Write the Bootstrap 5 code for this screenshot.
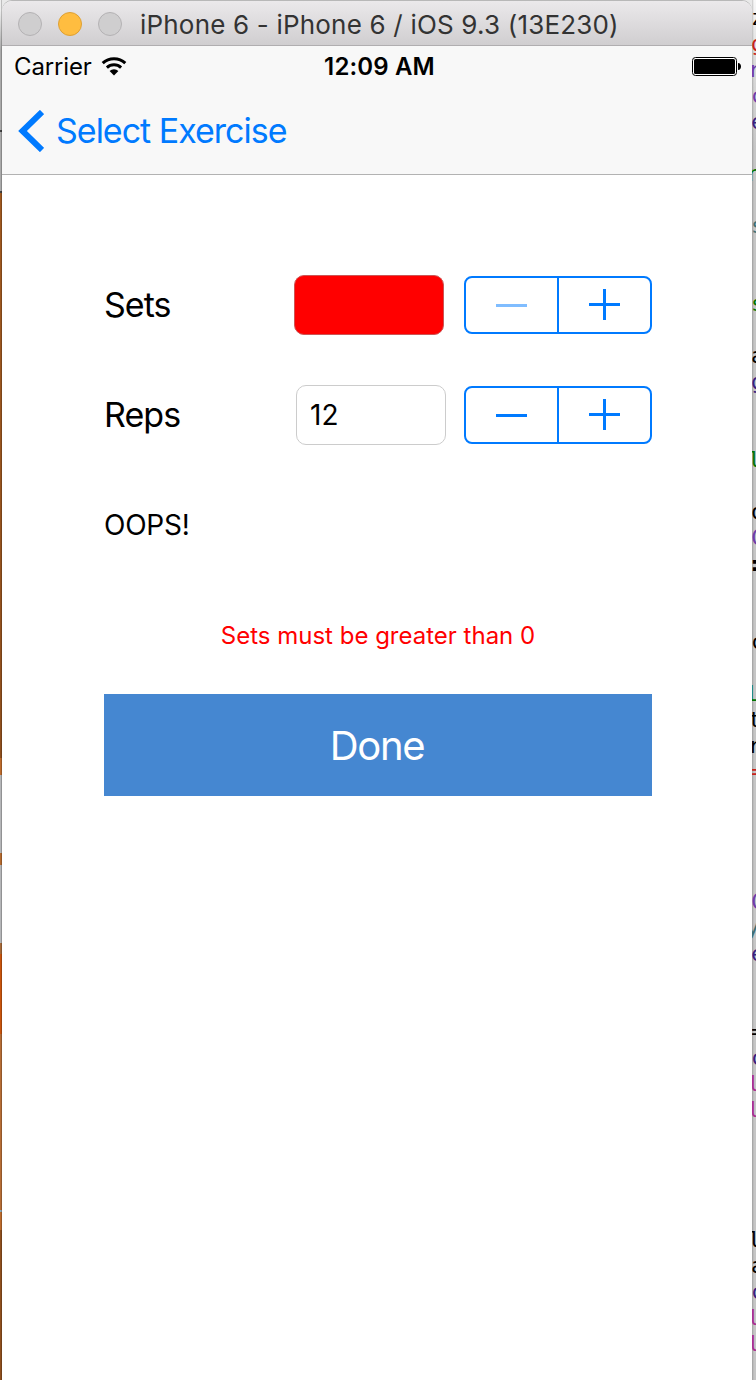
<!DOCTYPE html>
<html lang="en">
<head>
<meta charset="utf-8">
<title>iPhone 6</title>
<link href="https://cdn.jsdelivr.net/npm/bootstrap@5.3.0/dist/css/bootstrap.min.css" rel="stylesheet">
<style>
body{height:1380px;font-family:Inter,"Liberation Sans",sans-serif;color:#000;background:#e9e9e9;line-height:1}
.left-edge{width:2px;background:linear-gradient(90deg,transparent 1px,#0003 1px),linear-gradient(#eee 0 10px,#aaa 50px 130px,#444 130px 132px,#aaa 132px 191px,#444 191px 193px,#a0591f 193px,#8f4f1d 758px,#bd6b2c 758px 775px,#b5b6b8 775px 853px,#b56a2e 853px 865px,#b5b6b8 865px 943px,#a86a38 943px 954px,#c9540c 954px 1034px,#b66d35 1034px 1210px,#8eaab8 1210px 1212px,#bd6b2c 1212px 1230px,#8f4f1d 1230px)}
.right-edge{width:4px;background:linear-gradient(90deg,#0003,transparent 2px),linear-gradient(#f8f8f8,#dcdcdc 60px,#c6c6c6 150px)}
.code{margin:5px 0 0 -1px;font:22px/26px "DejaVu Sans Mono",monospace;overflow:hidden;color:#000}
.code .n{margin-left:-3px}
.code .n5{margin-left:-5px}
.code .p{color:#703daa}.code .i{color:#3a2080}.code .g{color:#007400}.code .r{color:#c9231b}.code .t{color:#3f6e74}.code .m{color:#aa2f91;margin-left:-4px}
.window{width:750px;margin-top:1px;height:1379px;border-radius:10px 10px 0 0;box-shadow:0 -1px 0 #b8b8b8}
.titlebar{height:45px;background:linear-gradient(#ebe9eb,#d0ced0);border-bottom:1px solid #b0aeb0;padding:2px 0 0 16px;color:#333;font-size:26px}
.light{width:24px;height:24px;border-radius:50%;background:#cfcecf;border:1px solid #b4b2b4}
.light.amber{background:#ffbd40;border-color:#dea034}
.title-text{margin:2px 0 0 18px;letter-spacing:.19px}
.phone-top{height:129px;background:#f8f8f8;border-bottom:1px solid #b2b2b2}
.status{height:42px;padding:0 11px 0 12px;font-size:24px}
.t-carrier{letter-spacing:-.15px}
.wifi{margin-left:9px}
.clock{letter-spacing:.15px;padding-left:5px}
.back{height:86px;padding-left:16px;color:#007aff;font-size:34px}
.back svg{margin-top:-1px}
.t-back{letter-spacing:-1px;margin:-1px 0 0 12px}
.screen{padding:100px 100px 0 102px}
.form-line{height:60px;margin-bottom:50px;font-size:34px}
.t-sets,.t-reps{letter-spacing:-.95px}
.field{width:150px;height:60px;border:1px solid #ccc;border-radius:10px;padding-left:13px;font-size:28px}
.field.bad{background:#f00;border-color:#c55;margin-right:2px}
.stepper{width:188px;height:58px;border:2px solid #007aff;border-radius:8px;margin-left:18px}
.stepper .half{width:91px}
.stepper .half:first-child{width:93px;border-right:2px solid #007aff}
.oops{height:60px;font-size:28px;letter-spacing:-.25px}
.error-text{height:60px;margin-top:50px;padding-top:2px;font-size:24px;color:#f00}
.done{height:102px;margin-top:29px;background:#4587d1;color:#fff;font-size:40px;border-radius:0;width:548px}
.t-done{letter-spacing:-1.3px;padding:1px 2px 0 0}
</style>
</head>
<body class="d-flex overflow-hidden">
<div class="left-edge flex-shrink-0"></div>
<main class="window bg-white overflow-hidden flex-shrink-0">
  <header class="titlebar d-flex align-items-center">
    <div class="d-flex gap-3"><span class="light"></span><span class="light amber"></span><span class="light"></span></div>
    <span class="title-text text-nowrap">iPhone 6 - iPhone 6 / iOS 9.3 (13E230)</span>
  </header>
  <div class="phone-top">
    <div class="status d-flex align-items-center justify-content-between position-relative">
      <div class="d-flex align-items-center"><span class="t-carrier">Carrier</span>
        <svg class="wifi" width="26" height="20" viewBox="0 0 26 20"><g fill="none" stroke="#000" stroke-width="3"><path d="M1.700 6.200a16.300 16.300 0 0 1 22.600 0"/><path d="M5.900 10.600a10.300 10.300 0 0 1 14.200 0"/></g><path d="M8.600 14a6.400 6.400 0 0 1 8.800 0L13 18.500z"/></svg>
      </div>
      <span class="clock fw-semibold position-absolute start-50 translate-middle-x">12:09 AM</span>
      <svg width="49" height="20" viewBox="0 0 49 20"><rect x=".5" y=".5" width="44" height="18" rx="3" fill="#fff" stroke="#000"/><rect x="2" y="2" width="41" height="15" rx="1.5"/><path d="M46 6c4 0 4 7 0 7z"/></svg>
    </div>
    <nav class="back d-flex align-items-center"><svg width="26" height="42" viewBox="0 0 26 42"><path d="M24 2 4.500 21 24 40" fill="none" stroke="#007aff" stroke-width="6"/></svg><span class="t-back">Select Exercise</span></nav>
  </div>
  <section class="screen">
    <div class="form-line d-flex align-items-center">
      <span class="t-sets me-auto">Sets</span><div class="field bad"></div>
      <div class="stepper d-flex"><div class="half"><svg width="91" height="54"><path d="M30 27.500h31" stroke="#80bdff" stroke-width="3"/></svg></div><div class="half"><svg width="91" height="54"><path d="M30 26.500h31M45.500 11v31" stroke="#007aff" stroke-width="3"/></svg></div></div>
    </div>
    <div class="form-line d-flex align-items-center">
      <span class="t-reps me-auto">Reps</span><div class="field d-flex align-items-center">12</div>
      <div class="stepper d-flex"><div class="half"><svg width="91" height="54"><path d="M30 27.500h31" stroke="#007aff" stroke-width="3"/></svg></div><div class="half"><svg width="91" height="54"><path d="M30 26.500h31M45.500 11v31" stroke="#007aff" stroke-width="3"/></svg></div></div>
    </div>
    <div class="oops d-flex align-items-center"><span>OOPS!</span></div>
    <div class="error-text d-flex align-items-center justify-content-center"><span>Sets must be greater than 0</span></div>
    <button class="done btn d-flex align-items-center justify-content-center p-0"><span class="t-done">Done</span></button>
  </section>
</main>
<!-- first column of the editor window behind the simulator -->
<div class="right-edge flex-shrink-0 overflow-hidden"><pre class="code">z
<span class="r">g</span>
<span class="p n">r</span>
<span class="p">c</span>
<span class="i">e</span>

<span class="g n5">r</span>

<span class="t">s</span>


<span class="g">s</span>

a
<span class="i">g</span>


<span class="g n">l</span>

o
<span class="p">C</span>
<b class="n">:</b>


c

<span class="g n">L</span>
<span class="n">t</span>
<span class="n">r</span>
<span class="r">=</span>




<span class="p">C</span>
<span class="t n5">y</span>
<span class="i">e</span>


=
<span class="i">c</span>
<span class="m">l</span>
<span class="m">l</span>




<span class="n">l</span>
a
<span class="i">c</span>
<span class="m">l</span>
<span class="m">l</span>
</pre></div>
</body>
</html>
